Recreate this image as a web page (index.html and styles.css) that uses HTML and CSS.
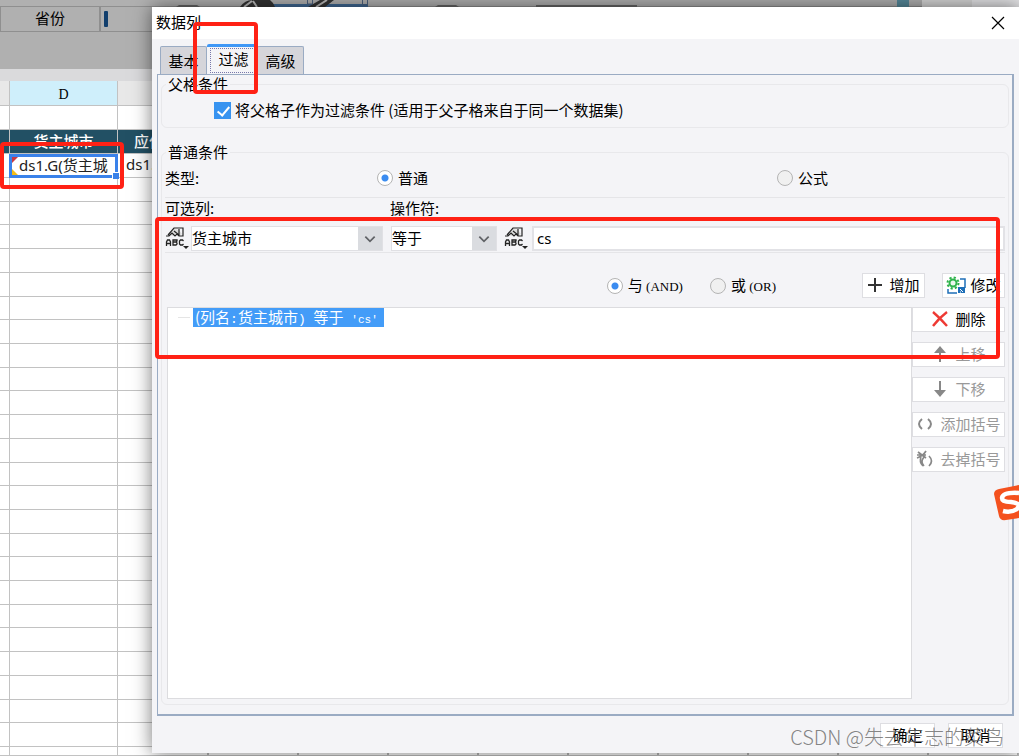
FILE: index.html
```html
<!DOCTYPE html>
<html lang="zh-CN">
<head>
<meta charset="utf-8">
<title>数据列</title>
<link rel="stylesheet" href="styles.css">
</head>
<body>
<svg class="defs" width="0" height="0" aria-hidden="true">
  <symbol id="field-type" viewBox="0 0 26 26">
    <path class="pen-fill" d="M4 9l5-6 5 1 3 4-3 2-3-2-3 2z"/>
    <path d="M1 10h3l3-3 3 3 2-2 2 2h2M3 9l6-7h9v8h-4V3M9 5l5 4" fill="none" stroke="#222" stroke-width="1.2"/>
    <path d="M1.500 20v-4l1-2h2l1 2v4M1.500 17.500h4M8 14v5h3l1-1v-1l-1-1H8h3l1-1v-1l-1 0zM18.500 15l-1-1h-2l-1 1v3l1 1h2l1-1" fill="none" stroke="#222" stroke-width="1.300"/>
    <path d="M18 20h6l-3 3z" fill="#222"/>
  </symbol>
  <symbol id="chevron" viewBox="0 0 12 12"><path d="M2 4l4 4 4-4" fill="none" stroke="#606266" stroke-width="1.500"/></symbol>
</svg>

<main class="workspace">
  <section class="sheet" aria-label="报表">
    <div class="canvas">
      <div class="param-row"><div class="param">省份</div><div class="param-field"><i class="caret"></i></div></div>
      <svg class="canvas-art" width="867" height="7" viewBox="0 0 867 7" aria-hidden="true">
        <path d="M105 4h111v3H105z" fill="#3f6894"/>
        <path d="M88 7q5-7 12-7h18q4 3 5 7zM156 7l12-7h14l-9 7z" fill="#333"/>
        <path d="M92 7l8-6M101 1l4 6M164 7l11-7" stroke="#bbb" stroke-width="2" fill="none"/>
        <path d="M155.500 0v4h5V0M210.500 0v5h5V0" fill="none" stroke="#4d617e"/>
        <path d="M24 7l3-2h18l3 2zM283 7l3-2h18l3 2zM384 5h101v2H384z" fill="#666"/>
        <path d="M745 0h12v7h-12z" fill="#56899a"/><path d="M770 0h50v7h-50z" fill="#d5d5d5"/><path d="M820 0h47v7h-47z" fill="#e3e3e5"/>
      </svg>
    </div>
    <table class="cells">
      <thead><tr><th></th><th class="col-active">D</th><th></th></tr></thead>
      <tbody>
        <tr><td></td><td></td><td></td></tr>
        <tr class="heading"><td></td><td>货主城市</td><td class="next">应付</td></tr>
        <tr class="values"><td></td><td class="picked">ds1.G(货主城<i class="mark-a"></i><i class="mark-b"></i><i class="handle"></i></td><td class="next">ds1.G</td></tr>
      </tbody>
      <tbody class="empty">
        <tr><td></td><td></td><td></td></tr><tr><td></td><td></td><td></td></tr><tr><td></td><td></td><td></td></tr><tr><td></td><td></td><td></td></tr>
        <tr><td></td><td></td><td></td></tr><tr><td></td><td></td><td></td></tr><tr><td></td><td></td><td></td></tr><tr><td></td><td></td><td></td></tr>
        <tr><td></td><td></td><td></td></tr><tr><td></td><td></td><td></td></tr><tr><td></td><td></td><td></td></tr><tr><td></td><td></td><td></td></tr>
        <tr><td></td><td></td><td></td></tr><tr><td></td><td></td><td></td></tr><tr><td></td><td></td><td></td></tr><tr><td></td><td></td><td></td></tr>
        <tr><td></td><td></td><td></td></tr><tr><td></td><td></td><td></td></tr><tr><td></td><td></td><td></td></tr><tr><td></td><td></td><td></td></tr>
        <tr><td></td><td></td><td></td></tr><tr><td></td><td></td><td></td></tr><tr><td></td><td></td><td></td></tr><tr><td></td><td></td><td></td></tr>
      </tbody>
      <tbody class="rest"><tr><td></td><td></td><td></td></tr></tbody>
    </table>
  </section>

  <section class="dialog" role="dialog" aria-labelledby="dialog-title">
    <header class="titlebar">
      <h1 id="dialog-title">数据列</h1>
      <button class="close" type="button" aria-label="关闭"><svg width="14" height="14" viewBox="0 0 14 14"><path d="M1 1l12 12M13 1L1 13" stroke="#000" stroke-width="1.200"/></svg></button>
    </header>
    <nav class="tabs" role="tablist">
      <button class="tab" role="tab" type="button">基本</button>
      <button class="tab tab-on" role="tab" type="button" aria-selected="true"><span>过滤</span></button>
      <button class="tab" role="tab" type="button">高级</button>
    </nav>
    <form class="panel">
      <fieldset class="group">
        <legend>父格条件</legend>
        <label class="check"><input type="checkbox" checked>将父格子作为过滤条件 (适用于父子格来自于同一个数据集)</label>
      </fieldset>
      <fieldset class="group group-main">
        <legend>普通条件</legend>
        <div class="type-row">
          <span>类型:</span>
          <label class="radio"><input type="radio" name="type" checked>普通</label>
          <label class="radio"><input type="radio" name="type">公式</label>
        </div>
        <div class="label-row"><label for="column">可选列:</label><label for="operator">操作符:</label></div>
        <div class="criteria">
          <button class="kind kind-color" type="button" aria-label="列类型"><svg width="26" height="26"><use href="#field-type"/></svg></button>
          <div class="combo combo-column"><select id="column"><option>货主城市</option></select><span class="arrow"><svg width="14" height="14"><use href="#chevron"/></svg></span></div>
          <div class="combo combo-operator"><select id="operator"><option>等于</option></select><span class="arrow"><svg width="14" height="14"><use href="#chevron"/></svg></span></div>
          <button class="kind" type="button" aria-label="值类型"><svg width="26" height="26"><use href="#field-type"/></svg></button>
          <input class="value" type="text" value="cs" aria-label="值">
        </div>
        <div class="actions">
          <label class="radio"><input type="radio" name="join" checked><span>与 <b>(AND)</b></span></label>
          <label class="radio radio-or"><input type="radio" name="join"><span>或 <b>(OR)</b></span></label>
          <button class="btn" type="button"><svg width="16" height="16" viewBox="0 0 16 16"><path d="M8 1v14M1 8h14" stroke="#333" stroke-width="2"/></svg>增加</button>
          <button class="btn btn-edit" type="button"><svg width="20" height="18" viewBox="0 0 20 18"><path d="M2 13v4h9M14 3h5v9" fill="none" stroke="#1e6fb8" stroke-width="1.500"/><path d="M12 11h7v6h-7z" fill="#1e6fb8"/><path d="M14 13l3 3M14 16h1" stroke="#fff"/><circle cx="7" cy="7" r="3.500" fill="#e9f8ec" stroke="#2fb34c" stroke-width="2"/><circle cx="7" cy="7" r="5.500" fill="none" stroke="#2fb34c" stroke-width="2" stroke-dasharray="2.200 2.120"/></svg>修改</button>
        </div>
        <div class="result">
          <ul class="tree"><li><span class="node">(列名<code>:</code>货主城市<code>) </code>等于<code> <small>'cs'</small></code></span></li></ul>
          <div class="side">
            <button class="btn" type="button"><svg width="18" height="18" viewBox="0 0 18 18"><path d="M2 2q7 6 14 14M16 2Q8 8 2 16" fill="none" stroke="#ee3a34" stroke-width="2.400"/></svg>删除</button>
            <button class="btn" type="button" disabled><svg width="18" height="18" viewBox="0 0 18 18"><path d="M9 17V5" stroke="#888" stroke-width="2"/><path d="M3 8l6-7 6 7z" fill="#888"/></svg>上移</button>
            <button class="btn" type="button" disabled><svg width="18" height="18" viewBox="0 0 18 18"><path d="M9 1v12" stroke="#888" stroke-width="2"/><path d="M3 10l6 7 6-7z" fill="#888"/></svg>下移</button>
            <button class="btn" type="button" disabled><svg width="18" height="18" viewBox="0 0 18 18"><path d="M6 4q-6 5 0 10M12 4q6 5 0 10" fill="none" stroke="#888" stroke-width="2"/></svg>添加括号</button>
            <button class="btn" type="button" disabled><svg width="18" height="18" viewBox="0 0 18 18"><path d="M8 7q-4 5 0 9M13 6q5 5 0 10M2 2l8 6M10 1Q7 6 1 8M5 7q-2 5 2 9M1 5h9" fill="none" stroke="#888" stroke-width="1.700"/></svg>去掉括号</button>
          </div>
        </div>
      </fieldset>
    </form>
    <footer class="foot"><button class="btn" type="button">确定</button><button class="btn" type="button">取消</button></footer>
  </section>

  <div class="outline outline-tab"></div>
  <div class="outline outline-cell"></div>
  <div class="outline outline-filter"></div>
  <svg class="ime" width="25" height="36" viewBox="0 0 25 36" aria-hidden="true"><path d="M0 9Q0 5 5 4L25 0v33L12 35q-6 1-7-4z" fill="#f4511e"/><path d="M25 8Q9 7 8 13q0 4 9 4 8 1 8 4M9 26q8 2 14-2l2-3" fill="none" stroke="#fff" stroke-width="4.500"/></svg>
  <p class="watermark">CSDN @失去年志的菜鸟</p>
</main>
</body>
</html>
```
FILE: styles.css
```css
* { box-sizing: border-box; }
body { margin: 0; font: 15px/20px "Noto Sans CJK SC", sans-serif; color: #000; }
button, input, select { font: inherit; color: inherit; margin: 0; }
button { padding: 0; border: 0; background: none; }
.defs { position: absolute; }
.workspace { position: relative; height: 100vh; min-height: 600px; overflow: hidden; }

.sheet { height: 100%; display: flex; flex-direction: column; background: #fff; }
.canvas { position: relative; height: 81px; background: #b0b0b0; border-bottom: 12px solid #dadadc; padding-top: 6px; }
.canvas-art { position: absolute; left: 152px; top: 0; }
.param-row { display: flex; height: 26px; border: 1px solid #8f8f8f; border-width: 1px 0; }
.param { width: 101px; text-align: center; line-height: 22px; border: 1px solid #8f8f8f; border-width: 0 2px 0 1px; }
.param-field { padding: 4px 3px; }
.caret { display: block; width: 4px; height: 16px; background: #123f6d; border-radius: 1px; }
.cells { flex: 1; display: flex; flex-direction: column; min-height: 0; }
.cells thead, .cells tbody { display: grid; grid-auto-rows: 24px; }
.cells .empty { flex: 1; grid-auto-rows: 1fr; }
.cells .rest { grid-auto-rows: 9px; background: repeating-linear-gradient(90deg, #fff 0 88px, #bbb 88px 90px) 119px 0 no-repeat; }
.cells tr { display: grid; grid-template-columns: 10px 108px 1fr; min-height: 0; }
.cells th, .cells td { padding: 0; border: 1px solid #c2c2c2; border-width: 0 1px 1px 0; line-height: 22px; overflow: hidden; white-space: nowrap; }
.cells thead { grid-auto-rows: 25px; }
.cells th { background: #e8e8e8; }
.cells .col-active { background: #cfeffb; font: 14px/28px "Liberation Serif", serif; }
.cells .heading td { background: #225064; color: #fff; text-align: center; font-weight: 500; }
.cells td.next { padding-left: 8px; }
.cells .heading td.next { padding-left: 16px; text-align: left; }
.cells .values td { font-family: "Noto Sans", "Noto Sans CJK SC", sans-serif; color: #222; line-height: 20px; }
.cells .values td.picked { position: relative; overflow: visible; border: 3px solid #3a82ea; margin-left: -1px; padding-left: 7px; line-height: 16px; }
.mark-a, .mark-b { position: absolute; left: 0; border: 3px solid transparent; }
.mark-a { top: 0; border-color: #c73b46 transparent transparent #c73b46; }
.mark-b { bottom: 0; border-color: transparent transparent #f6bd16 #f6bd16; }
.handle { position: absolute; right: -4px; bottom: -4px; width: 7px; height: 7px; background: #3a82ea; border: 1px solid #fff; border-width: 1px 0 0 1px; }

.dialog { position: absolute; inset: 7px 0 3px 152px; display: flex; flex-direction: column; background: #f4f4f7; box-shadow: 0 0 18px #0008; }
.titlebar { display: flex; justify-content: space-between; align-items: center; height: 32px; background: #fff; padding: 0 14px 0 4px; }
.titlebar h1 { margin: 0; font-size: 15px; line-height: 32px; font-weight: 400; padding-bottom: 2px; }
.close { display: flex; }
.tabs { display: flex; align-items: flex-end; height: 35px; padding-left: 8px; }
.tab { height: 28px; width: 47px; background: #d5d5da; border: 1px solid #9aabc3; border-bottom: 0; border-radius: 2px 2px 0 0; }
.tab-on { height: 30px; width: 50px; border: 0; border-top: 3px solid #3f97f6; background: #f4f4f7; padding: 0 0 0 3px; }
.tab-on span { display: block; height: 25px; border: 1px dotted #77a; line-height: 20px; }
.panel { flex: 1; min-height: 0; display: flex; flex-direction: column; gap: 15px; margin: 0 5px 0 5px; padding: 0 3px 9px; border: 1px solid #9aabc3; border-width: 1px 2px 2px 1px; }
.group { min-width: 0; margin: 0; padding: 0 3px; border: 1px solid #e8e8eb; border-radius: 6px; }
.group legend { margin-left: 1px; padding: 0 2px; line-height: 18px; }
.group:first-child { height: 53px; }
.check { display: flex; align-items: center; gap: 4px; height: 34px; padding-left: 49px; }
.check input { appearance: none; width: 17px; height: 17px; background: #3793f0; position: relative; }
.check input::after { content: ""; position: absolute; left: 6px; top: 2px; width: 5px; height: 10px; border: solid #fff; border-width: 0 2px 2px 0; transform: rotate(40deg); }
.group-main { flex: 1; min-height: 0; display: flex; flex-direction: column; padding-bottom: 5px; }
.type-row { display: grid; grid-template-columns: 212px 400fr 228fr; align-items: center; height: 37px; padding-bottom: 2px; border-bottom: 1px solid #e5e5e8; }
.radio { display: flex; align-items: center; gap: 5px; }
.radio input { appearance: none; width: 16px; height: 16px; border: 1px solid #b4b4b4; border-radius: 50%; background: #f0f0f0; }
.radio input:checked { background: radial-gradient(circle, #3b8cf0 3px, #fff 4px); }
.radio b { font: 13px/20px "Liberation Serif", serif; }
.label-row { display: grid; grid-template-columns: 225px 1fr; height: 21px; }
.criteria { display: flex; padding: 7px 0 1px; border-bottom: 1px solid #e5e5e8; }
.kind { width: 26px; height: 24px; display: flex; align-items: flex-start; }
.pen-fill { fill: #dcdcdc; }
.kind-color { color: #000; }
.combo { position: relative; height: 25px; border: 1px solid #e0e0e4; background: #fff; }
.combo-column { width: 192px; margin-right: 8px; }
.combo-operator { width: 106px; margin-right: 7px; }
.combo select { appearance: none; width: 100%; height: 23px; border: 0; padding: 0 0 2px; background: transparent; }
.arrow { position: absolute; inset: 0 0 0 auto; width: 24px; display: grid; place-items: center; background: #dadce0; pointer-events: none; }
.value { flex: 1; min-width: 0; height: 25px; margin-left: 2px; border: 2px solid #e2e2e6; background: #fff; padding: 0 3px 2px; font-family: "Noto Sans", sans-serif; }
.actions { display: flex; justify-content: flex-end; padding: 20px 0 9px; }
.radio-or { margin: 0 86px 0 27px; }
.btn { display: flex; align-items: center; justify-content: center; gap: 6px; height: 25px; padding-bottom: 1px; border: 1px solid #dedee2; background: #fff; white-space: nowrap; }
.btn:disabled { color: #999; }
.actions .btn { width: 63px; }
.actions .btn-edit { margin-left: 17px; gap: 4px; }
.result { flex: 1; min-height: 0; display: flex; padding-left: 2px; }
.tree { flex: 1; margin: 0; padding: 0 0 0 10px; list-style: none; background: #fff; border: 1px solid #dcdcdf; }
.tree li { display: flex; align-items: center; gap: 3px; }
.tree li::before { content: ""; width: 12px; height: 1px; background: #e5e5e5; }
.node { height: 19px; background: #439cf8; color: #fff; padding: 0 6px 0 2px; line-height: 17px; white-space: pre; }
.node code { font: 13px/17px "Liberation Mono", monospace; }
.node small { font-size: 11px; }
.side { width: 93px; display: flex; flex-direction: column; gap: 10px; }
.foot { display: flex; justify-content: flex-end; gap: 13px; padding: 7px 16px 5px; }
.foot .btn { width: 55px; }

.outline { position: absolute; border: 4px solid #ff2115; border-radius: 4px; pointer-events: none; }
.outline-tab { left: 193px; top: 22px; width: 65px; height: 72px; }
.outline-cell { left: 0; top: 142px; width: 124px; height: 47px; }
.outline-filter { left: 155px; right: 19px; top: 217px; height: 142px; }
.ime { position: absolute; right: 0; top: 485px; }
.watermark { position: absolute; right: 15px; bottom: 5px; margin: 0; font: 300 20px/28px "Noto Sans CJK SC", sans-serif; color: #666c; }
```
